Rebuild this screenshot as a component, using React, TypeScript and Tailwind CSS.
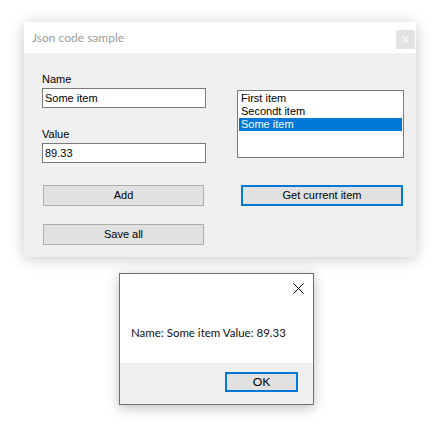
import React from "react";

const win = { fontFamily: '"Liberation Sans", Arial, sans-serif' };
const seg = { fontFamily: 'Lato, "Noto Sans", sans-serif' };

const items = ["First item", "Secondt item", "Some item"];

function WinButton({ label, focused, className = "" }: { label: string; focused?: boolean; className?: string }) {
  return (
    <button
      type="button"
      className={
        "h-[21px] bg-[#e1e1e1] text-[11px] font-normal leading-[13px] text-black " +
        (focused ? "border-2 border-[#0078d7] " : "border border-[#adadad] ") +
        className
      }
      style={win}
    >
      {label}
    </button>
  );
}

export default function App() {
  return (
    <div className="min-h-[430px] w-[444px] bg-white pt-[22px]">
      {/* main form */}
      <div className="ml-[24px] w-[392px] shadow-[0_2px_14px_rgba(0,0,0,0.22)]">
        <div className="flex h-[31px] items-start justify-between bg-white">
          <div className="pl-[8px] pt-[8px] text-[12px] leading-[16px] text-[#9b9b9b]" style={seg}>
            Json code sample
          </div>
          <div className="mr-[1px] mt-[8px] flex h-[19px] w-[19px] items-center justify-center bg-[#e3e3e3]">
            <svg width="7" height="7" viewBox="0 0 7 7">
              <path d="M0.5 0.5L6.5 6.5M6.5 0.5L0.5 6.5" stroke="#f7f7f7" strokeWidth="1.2" />
            </svg>
          </div>
        </div>
        <div className="flex h-[204px] bg-[#f0f0f0] pl-[18px] text-black" style={win}>
          <div className="flex w-[164px] flex-col pt-[20px]">
            <label className="text-[11px] leading-[13px]">Name</label>
            <input
              readOnly
              value="Some item"
              className="mt-[2px] h-[20px] border border-[#7a7a7a] bg-white px-[2px] text-[11px] outline-none"
              style={win}
            />
            <label className="mt-[20px] text-[11px] leading-[13px]">Value</label>
            <input
              readOnly
              value="89.33"
              className="mt-[2px] h-[20px] border border-[#7a7a7a] bg-white px-[2px] text-[11px] outline-none"
              style={win}
            />
            <WinButton label="Add" className="ml-[1px] mt-[22px] w-[161px]" />
            <WinButton label="Save all" className="ml-[1px] mt-[18px] w-[161px]" />
          </div>
          <div className="ml-[31px] flex w-[167px] flex-col pt-[37px]">
            <div className="h-[68px] border border-[#7a7a7a] bg-white p-[1px]">
              {items.map((it, i) => (
                <div
                  key={it}
                  className={
                    "h-[13px] pl-[2px] text-[11px] leading-[13px] " +
                    (i === 2 ? "bg-[#0078d7] text-white" : "text-black")
                  }
                >
                  {it}
                </div>
              ))}
            </div>
            <WinButton label="Get current item" focused className="ml-[4px] mt-[27px] w-[162px]" />
          </div>
        </div>
      </div>

      {/* message box */}
      <div className="ml-[119px] mt-[16px] w-[195px] border border-[#6f6f6f] bg-white shadow-[0_3px_12px_rgba(0,0,0,0.25)]">
        <div className="h-[89px]">
          <div className="flex justify-end pr-[9px] pt-[9px]">
            <svg width="11" height="11" viewBox="0 0 11 11">
              <path d="M0.5 0.5L10.5 10.5M10.5 0.5L0.5 10.5" stroke="#000" strokeWidth="1" />
            </svg>
          </div>
          <div className="mt-[31px] pl-[11px] text-[11.5px] leading-[16px] text-[#111]" style={seg}>
            Name: Some item Value: 89.33
          </div>
        </div>
        <div className="flex h-[41px] justify-end bg-[#f0f0f0] pr-[15px] pt-[9px]">
          <button
            type="button"
            className="h-[20px] w-[73px] border-2 border-[#0078d7] bg-[#e1e1e1] text-[12px] leading-[14px] text-black"
            style={seg}
          >
            OK
          </button>
        </div>
      </div>
    </div>
  );
}
